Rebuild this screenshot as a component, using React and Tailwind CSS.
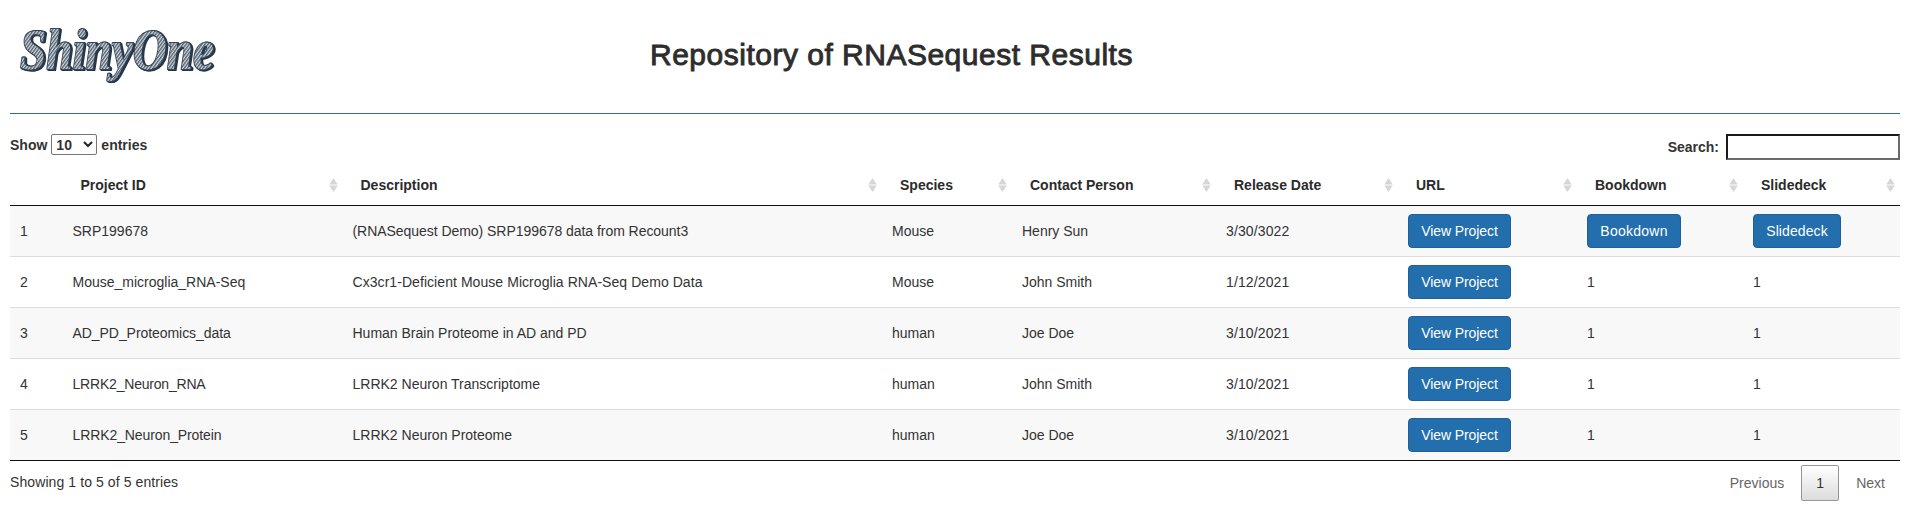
const columns = [
  { label: "Project ID", width: "w-[280px]" },
  { label: "Description", width: "w-[539.5px]" },
  { label: "Species", width: "w-[130px]" },
  { label: "Contact Person", width: "w-[204px]" },
  { label: "Release Date", width: "w-[182px]" },
  { label: "URL", width: "w-[179px]" },
  { label: "Bookdown", width: "w-[166px]" },
  { label: "Slidedeck", width: "w-[157px]" },
];

const rows = [
  {
    id: "SRP199678",
    desc: "(RNASequest Demo) SRP199678 data from Recount3",
    descTracking: "tracking-[-0.045px]",
    species: "Mouse",
    person: "Henry Sun",
    date: "3/30/3022",
    links: true,
  },
  {
    id: "Mouse_microglia_RNA-Seq",
    desc: "Cx3cr1-Deficient Mouse Microglia RNA-Seq Demo Data",
    descTracking: "tracking-[0.06px]",
    species: "Mouse",
    person: "John Smith",
    date: "1/12/2021",
  },
  {
    id: "AD_PD_Proteomics_data",
    idTracking: "tracking-[-0.06px]",
    desc: "Human Brain Proteome in AD and PD",
    species: "human",
    person: "Joe Doe",
    date: "3/10/2021",
  },
  {
    id: "LRRK2_Neuron_RNA",
    idTracking: "tracking-[-0.2px]",
    desc: "LRRK2 Neuron Transcriptome",
    species: "human",
    person: "John Smith",
    date: "3/10/2021",
  },
  {
    id: "LRRK2_Neuron_Protein",
    idTracking: "tracking-[-0.1px]",
    desc: "LRRK2 Neuron Proteome",
    species: "human",
    person: "Joe Doe",
    date: "3/10/2021",
  },
];

function Logo() {
  return (
    <svg width="230" height="113" viewBox="0 0 230 113" className="block [filter:drop-shadow(1px_1px_0_#27374a)_drop-shadow(1px_0_0_#27374a)]">
      <defs>
        <pattern id="hatch" width="2.4" height="2.4" patternUnits="userSpaceOnUse" patternTransform="rotate(40)">
          <rect width="2.4" height="2.4" fill="#d3d9de" />
          <rect width="1.2" height="2.4" fill="#4d5c6b" />
        </pattern>
      </defs>
      <text
        transform="translate(20 69) scale(1 1.15)"
        fontFamily="'Liberation Serif', serif"
        fontStyle="italic"
        fontWeight="bold"
        fontSize="50"
        textLength="194"
        lengthAdjust="spacingAndGlyphs"
        fill="url(#hatch)"
        stroke="#34465a"
        strokeWidth="1.8"
        strokeLinejoin="round"
        paintOrder="stroke"
      >
        ShinyOne
      </text>
    </svg>
  );
}

function SortIcon() {
  return (
    <svg width="9" height="14" viewBox="0 0 9 14" className="shrink-0" fill="#d6d6d6">
      <path d="M4.5 0 8.7 6.4H.3zM4.5 14 8.7 7.6H.3z" />
    </svg>
  );
}

function Button({ className, children }) {
  return (
    <button className={`block h-[34px] whitespace-nowrap rounded-[4px] border border-[#1f609a] bg-[#236eac] text-center leading-5 text-white ${className}`}>
      {children}
    </button>
  );
}

export default function App() {
  return (
    <div className="h-[529px] w-[1910px] overflow-hidden bg-white font-['Liberation_Sans',Arial,sans-serif] text-[14px] leading-5 text-[#333]">
      <header className="flex h-[113px]">
        <Logo />
        <h2 className="ml-[420px] mt-[38px] text-[30px] font-normal leading-[33px] tracking-[0.5px] text-[#2d2d2d] [-webkit-text-stroke:0.9px_#2d2d2d]">
          Repository of RNASequest Results
        </h2>
      </header>
      <div className="mx-[10px] h-px bg-[#2f62c9]" />

      <main className="mx-[10px]">
        <div className="flex h-[51px] items-start justify-between pt-5 font-bold">
          <label className="flex h-[21px] items-center">
            Show
            <span className="mx-1 flex h-[21px] w-[46px] items-center justify-between rounded-[2px] border border-[#767676] bg-white pl-1 pr-[3px]">
              10
              <svg width="10" height="7" viewBox="0 0 10 7" fill="none" stroke="#222" strokeWidth="2">
                <path d="M1 1l4 4 4-4" />
              </svg>
            </span>
            entries
          </label>
          <label className="flex h-[26px] items-center">
            Search:
            <input className="ml-[7px] h-[26px] w-[174px] border-2 border-b-[#6b6b6b] border-l-[#1a1a1a] border-r-[#6b6b6b] border-t-[#1a1a1a] bg-white outline-none" />
          </label>
        </div>

        <table className="w-[1890px] table-fixed border-separate border-spacing-0 border-b border-[#111]">
          <thead>
            <tr className="h-[41px]">
              <th className="h-[41px] w-[52.5px] border-b border-[#111] p-0" />
              {columns.map((c) => (
                <th key={c.label} className={`${c.width} h-[41px] border-b border-[#111] p-0`}>
                  <div className="flex items-center justify-between pl-[18px] pr-[5px] text-[#2b2b2b]">
                    {c.label}
                    <SortIcon />
                  </div>
                </th>
              ))}
            </tr>
          </thead>
          <tbody>
            {rows.map((row, i) => {
              const td = i === 0 ? "px-[10px] py-0" : "border-t border-[#ddd] px-[10px] py-0";
              return (
                <tr key={row.id} className={`${i === 0 ? "h-[50px]" : "h-[51px]"} ${i % 2 === 0 ? "bg-[#f8f8f8]" : "bg-white"}`}>
                  <td className={td}>{i + 1}</td>
                  <td className={`${td} ${row.idTracking ?? ""}`}>{row.id}</td>
                  <td className={`${td} ${row.descTracking ?? ""}`}>{row.desc}</td>
                  <td className={td}>{row.species}</td>
                  <td className={td}>{row.person}</td>
                  <td className={`${td} tracking-[0.12px]`}>{row.date}</td>
                  <td className={td}><Button className="w-[103px] tracking-[-0.1px]">View Project</Button></td>
                  <td className={td}>{row.links ? <Button className="w-[94px] tracking-[0.25px]">Bookdown</Button> : "1"}</td>
                  <td className={td}>{row.links ? <Button className="w-[88px] tracking-[0.1px]">Slidedeck</Button> : "1"}</td>
                </tr>
              );
            })}
          </tbody>
        </table>

        <footer className="flex items-start justify-between">
          <div className="pt-[11px] tracking-[0.09px]">Showing 1 to 5 of 5 entries</div>
          <nav className="mt-1 flex h-9 items-center text-[#666]">
            <span className="px-[15px]">Previous</span>
            <span className="mx-[2px] flex h-9 w-[38px] items-center justify-center rounded-[2px] border border-[#979797] bg-gradient-to-b from-white to-[#dcdcdc] text-[#333]">
              1
            </span>
            <span className="px-[15px]">Next</span>
          </nav>
        </footer>
      </main>
    </div>
  );
}
